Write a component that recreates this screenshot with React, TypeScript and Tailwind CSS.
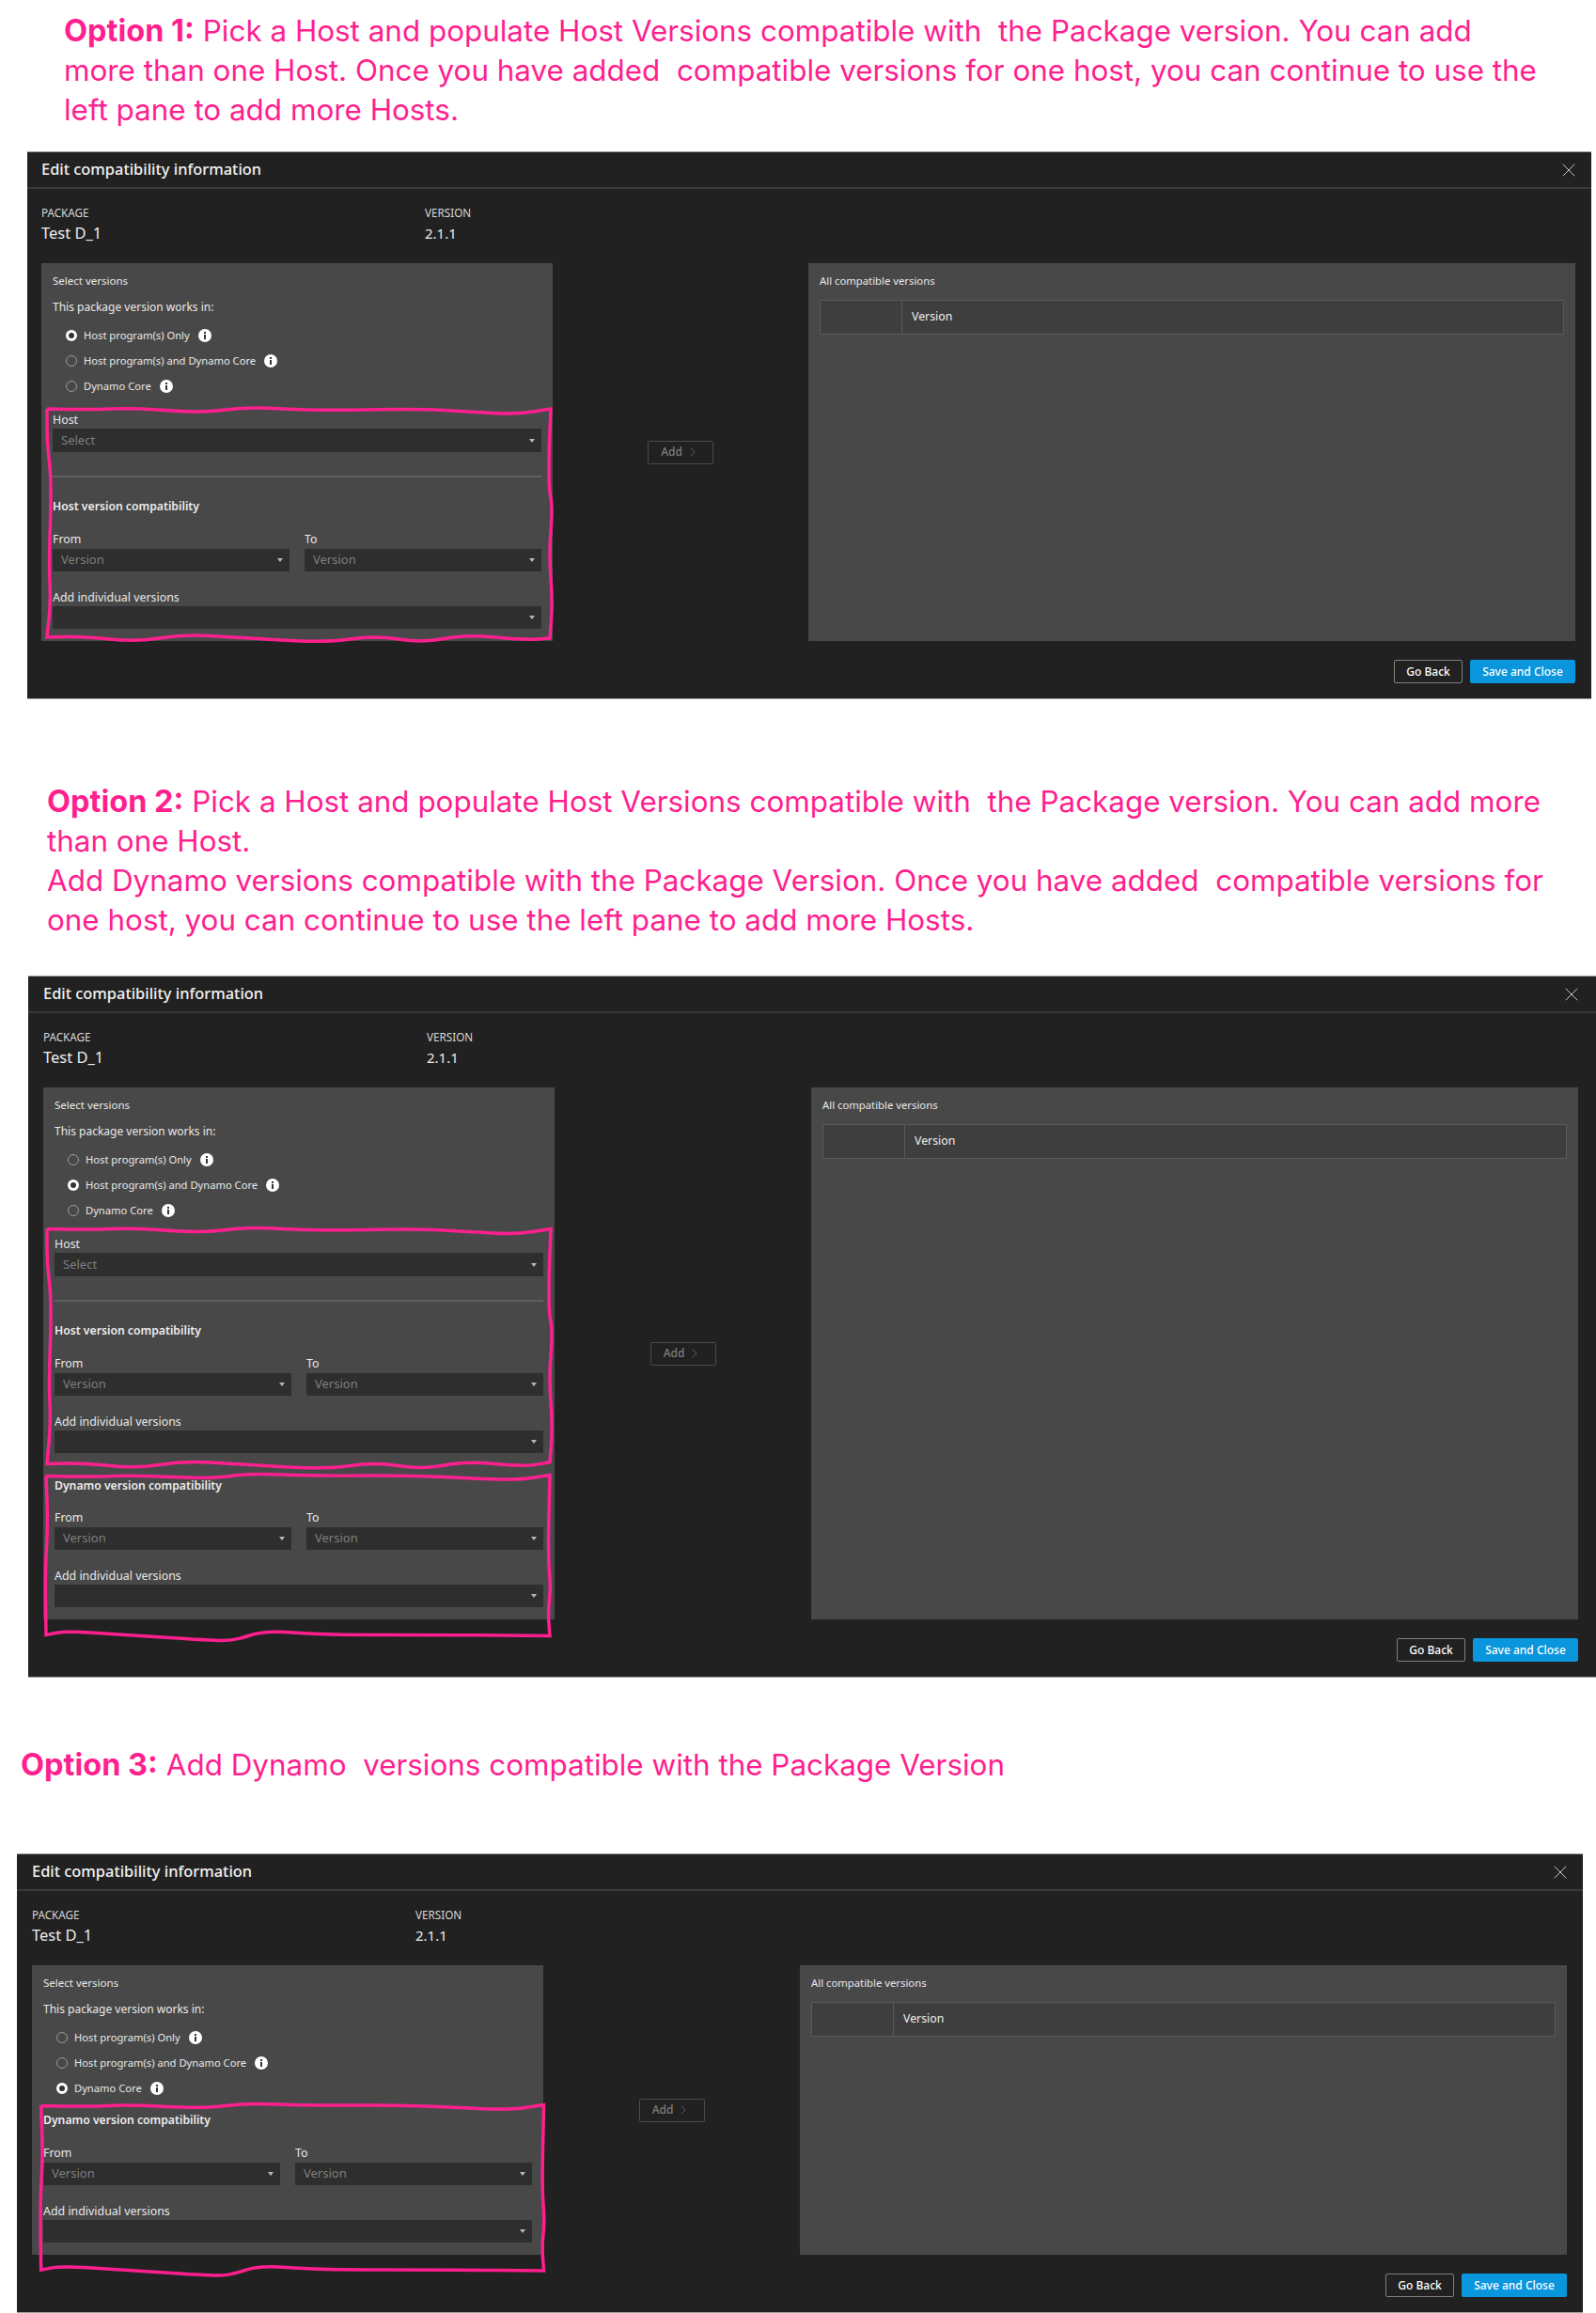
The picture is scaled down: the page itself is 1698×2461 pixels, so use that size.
import React from 'react';
import { ChevronRight, X } from 'lucide-react';

type Point = [number, number];
type Mode = 'host' | 'both' | 'dynamo';

const RADIOS = [
  { id: 'host', label: 'Host program(s) Only' },
  { id: 'both', label: 'Host program(s) and Dynamo Core' },
  { id: 'dynamo', label: 'Dynamo Core' },
];

// hand drawn outlines, in page coordinates
const smooth = (pts: Point[]) => {
  let d = `M${pts[0][0]} ${pts[0][1]}`;
  for (let i = 1; i < pts.length - 1; i++) {
    const mx = (pts[i][0] + pts[i + 1][0]) / 2;
    const my = (pts[i][1] + pts[i + 1][1]) / 2;
    d += ` Q${pts[i][0]} ${pts[i][1]} ${mx} ${my}`;
  }
  const last = pts[pts.length - 1];
  return `${d} L${last[0]} ${last[1]}`;
};

const hostOutline = (dx: number, dy: number, bottomDy: number): Point[] => {
  const top: Point[] = [[50, 435], [95, 436], [141, 434], [195, 438], [225, 438], [266, 433], [336, 437], [444, 435], [500, 438], [548, 441], [586, 435], [586, 435]];
  const right: Point[] = [[584, 480], [584, 520], [588, 540], [584, 590], [588, 640], [585, 679], [585, 679]];
  const bottom: Point[] = [[558, 681], [496, 675], [450, 684], [398, 676], [347, 684], [250, 678], [195, 675], [144, 683], [90, 677], [50, 678], [50, 678]];
  const left: Point[] = [[54, 640], [52, 600], [55, 513], [50, 470], [50, 435]];
  return [
    ...top.map(([x, y]): Point => [x + dx, y + dy]),
    ...right.map(([x, y]): Point => [x + dx, y + dy + (bottomDy - dy) * 0.6]),
    ...bottom.map(([x, y]): Point => [x + dx, y + bottomDy]),
    ...left.map(([x, y]): Point => [x + dx, y + dy]),
  ];
};

const dynamoOutline = (dx: number, dy: number, h: number): Point[] => [
  [49 + dx, 1570 + dy], [100 + dx, 1571 + dy], [140 + dx, 1569 + dy], [225 + dx, 1573 + dy], [266 + dx, 1567 + dy], [336 + dx, 1570 + dy], [444 + dx, 1569 + dy], [545 + dx, 1575 + dy], [585 + dx, 1569 + dy], [585 + dx, 1569 + dy],
  [583 + dx, 1570 + dy + h * 0.5], [586 + dx, 1570 + dy + h * 0.7], [583 + dx, 1570 + dy + h * 0.85], [585 + dx, 1570 + dy + h], [585 + dx, 1570 + dy + h],
  [480 + dx, 1570 + dy + h - 1], [340 + dx, 1570 + dy + h - 1], [282 + dx, 1570 + dy + h - 6], [250 + dx, 1570 + dy + h + 5], [225 + dx, 1570 + dy + h + 5], [120 + dx, 1570 + dy + h - 2], [70 + dx, 1570 + dy + h - 5], [49 + dx, 1570 + dy + h - 1], [49 + dx, 1570 + dy + h - 1],
  [48 + dx, 1570 + dy + h * 0.6], [51 + dx, 1570 + dy + h * 0.3], [49 + dx, 1570 + dy],
];

function Label({ children }: { children: React.ReactNode }) {
  return <div className="h-4 text-[12.4px] leading-[18px] text-[#e8e8e8]">{children}</div>;
}

function Select({ placeholder, tall }: { placeholder?: string; tall?: boolean }) {
  return (
    <div className={`flex items-center justify-between bg-[#2e2e2e] pl-[9px] pr-[7px] text-[13px] text-[#7f7f7f] ${tall ? 'h-[25px]' : 'h-6'}`}>
      <span>{placeholder}</span>
      <span className="h-0 w-0 border-x-[3px] border-t-[4px] border-x-transparent border-t-[#b8b8b8]" />
    </div>
  );
}

function VersionRange({ heading, compact }: { heading: string; compact?: boolean }) {
  return (
    <div>
      <div className="h-4 text-[12.2px] font-semibold leading-[18px] text-[#ededed]">{heading}</div>
      <div className={`grid grid-cols-2 gap-x-4 ${compact ? 'mt-[18px]' : 'mt-[19px]'}`}>
        <div>
          <Label>From</Label>
          <div className="mt-[3px]">
            <Select placeholder="Version" />
          </div>
        </div>
        <div>
          <Label>To</Label>
          <div className="mt-[3px]">
            <Select placeholder="Version" />
          </div>
        </div>
      </div>
      <div className="mt-[19px]">
        <Label>Add individual versions</Label>
        <div className="mt-[2px]">
          <Select />
        </div>
      </div>
    </div>
  );
}

function InfoIcon() {
  return (
    <svg width="14" height="14" viewBox="0 0 14 14" className="ml-[9px]">
      <circle cx="7" cy="7" r="7" fill="#ffffff" />
      <rect x="6" y="6" width="2" height="5" fill="#333333" />
      <rect x="6" y="3" width="2" height="2" fill="#333333" />
    </svg>
  );
}

function LeftPanel({ mode }: { mode: Mode }) {
  return (
    <div className="w-[544px] bg-[#484848] px-3 pb-[13px] pt-[11px]">
      <div className="h-4 text-[11.5px] leading-4 text-[#e8e8e8]">Select versions</div>
      <div className="mt-3">
        <div className="h-4 text-[12px] leading-4 text-[#e8e8e8]">This package version works in:</div>
      </div>
      <div className="mt-[14px] flex flex-col gap-[11px] pl-[14px]">
        {RADIOS.map((r) => (
          <div key={r.id} className="flex h-4 items-center">
            {r.id === mode ? (
              <span className="h-3 w-3 rounded-full border-[3px] border-white bg-[#333333]" />
            ) : (
              <span className="h-3 w-3 rounded-full border border-[#9a9a9a]" />
            )}
            <span className="ml-[7px] text-[11.2px] leading-4 text-[#e8e8e8]">{r.label}</span>
            <InfoIcon />
          </div>
        ))}
      </div>
      {mode !== 'dynamo' && (
        <div className="mt-[19px]">
          <Label>Host</Label>
          <div className="mt-[2px]">
            <Select placeholder="Select" tall />
          </div>
          <div className="mt-[25px] h-[2px] bg-[#5f5f5f]" />
          <div className="mt-[22px]">
            <VersionRange heading="Host version compatibility" />
          </div>
        </div>
      )}
      {mode === 'both' && (
        <div className="mt-[26px]">
          <VersionRange heading="Dynamo version compatibility" compact />
        </div>
      )}
      {mode === 'dynamo' && (
        <div className="mt-[17px]">
          <VersionRange heading="Dynamo version compatibility" />
        </div>
      )}
    </div>
  );
}

function RightPanel() {
  return (
    <div className="w-[816px] bg-[#484848] px-3 pt-[11px]">
      <div className="h-4 text-[11.3px] leading-4 text-[#e8e8e8]">All compatible versions</div>
      <div className="mt-3 flex h-[37px] border border-[#5a5a5a] bg-[#3e3e3e]">
        <div className="w-[87px] border-r border-[#5a5a5a]" />
        <div className="flex items-center pl-[10px] text-[12.3px] text-[#f0f0f0]">Version</div>
      </div>
    </div>
  );
}

function Dialog({ mode, className, pad, box, outlines }: { mode: Mode; className: string; pad: string; box: string; outlines: Point[][] }) {
  return (
    <div className={`relative bg-[#212121] shadow-[0_-1px_0_#a0a0a0,0_1px_0_#a0a0a0] ${className}`}>
      <div className={`flex h-[39px] items-center justify-between border-b-2 border-[#3a3a3a] ${pad}`}>
        <span className="text-[16.4px] font-medium text-[#f2f2f2]">Edit compatibility information</span>
        <X size={24} strokeWidth={1} className="mr-[-5px] text-[#c4c4c4]" />
      </div>
      <div className={`flex h-[79px] pt-[15px] ${pad}`}>
        <div className="w-[408px]">
          <div className="text-[11.7px] leading-5 text-[#d8d8d8]">PACKAGE</div>
          <div className="text-[16.5px] leading-6 text-[#ededed]">Test D_1</div>
        </div>
        <div>
          <div className="text-[11.7px] leading-5 text-[#d8d8d8]">VERSION</div>
          <div className="text-[15px] leading-6 text-[#ededed]">2.1.1</div>
        </div>
      </div>
      <div className={`flex items-stretch ${pad}`}>
        <LeftPanel mode={mode} />
        <div className="flex flex-1 items-center justify-center">
          <div className="flex h-[25px] w-[70px] items-center justify-center gap-[3px] rounded-[2px] border border-[#4a4a4a] text-[12px] font-medium text-[#7d7d7d]">
            Add
            <ChevronRight size={16} strokeWidth={1} />
          </div>
        </div>
        <RightPanel />
      </div>
      <div className={`flex justify-end gap-2 pb-4 pt-5 ${pad}`}>
        <div className="flex h-[25px] w-[73px] items-center justify-center rounded-[2px] border border-[#808080] text-[12px] font-medium text-white">Go Back</div>
        <div className="flex h-[25px] w-[112px] items-center justify-center rounded-[2px] bg-[#0a96dc] text-[12px] font-medium text-white">Save and Close</div>
      </div>
      <svg viewBox={box} className="pointer-events-none absolute inset-0 h-full w-full overflow-visible" fill="none">
        {outlines.map((pts, i) => (
          <path key={i} d={smooth(pts)} stroke="#ff1f8f" strokeWidth="3.5" strokeLinejoin="miter" />
        ))}
      </svg>
    </div>
  );
}

export default function App() {
  return (
    <div className="h-[2461px] w-[1698px] overflow-hidden bg-white font-['Noto_Sans',sans-serif]">
      <div className="ml-[68px] whitespace-pre pt-3 font-['Inter',sans-serif] text-[31.4px] leading-[42px] text-[#ff1f8f]">
        <b className="text-[32.5px] font-bold">Option 1:</b> Pick a Host and populate Host Versions compatible with  the Package version. You can add
        <br />
        more than one Host. Once you have added  compatible versions for one host, you can continue to use the
        <br />
        left pane to add more Hosts.
      </div>
      <Dialog
        mode="host"
        className="ml-[29px] mt-6 w-[1664px]"
        pad="pl-[15px] pr-[17px]"
        box="29 162 1664 581"
        outlines={[hostOutline(0, 0, 0)]}
      />
      <div className="ml-[50px] mt-[89px] whitespace-pre font-['Inter',sans-serif] text-[31.4px] leading-[42px] text-[#ff1f8f]">
        <b className="text-[32.5px] font-bold">Option 2:</b> Pick a Host and populate Host Versions compatible with  the Package version. You can add more
        <br />
        than one Host.
        <br />
        Add Dynamo versions compatible with the Package Version. Once you have added  compatible versions for
        <br />
        one host, you can continue to use the left pane to add more Hosts.
      </div>
      <Dialog
        mode="both"
        className="ml-[30px] mt-[39px] w-[1668px]"
        pad="pl-[16px] pr-[19px]"
        box="30 1039 1668 744"
        outlines={[hostOutline(0, 872, 879), dynamoOutline(0, 0, 170)]}
      />
      <div className="ml-[22px] mt-[73px] whitespace-pre font-['Inter',sans-serif] text-[31.4px] leading-[42px] text-[#ff1f8f]">
        <b className="text-[32.5px] font-bold">Option 3:</b> Add Dynamo  versions compatible with the Package Version
      </div>
      <Dialog
        mode="dynamo"
        className="ml-[18px] mt-[74px] w-[1666px]"
        pad="pl-[16px] pr-[17px]"
        box="18 1972 1666 488"
        outlines={[dynamoOutline(-7, 670, 176)]}
      />
    </div>
  );
}
